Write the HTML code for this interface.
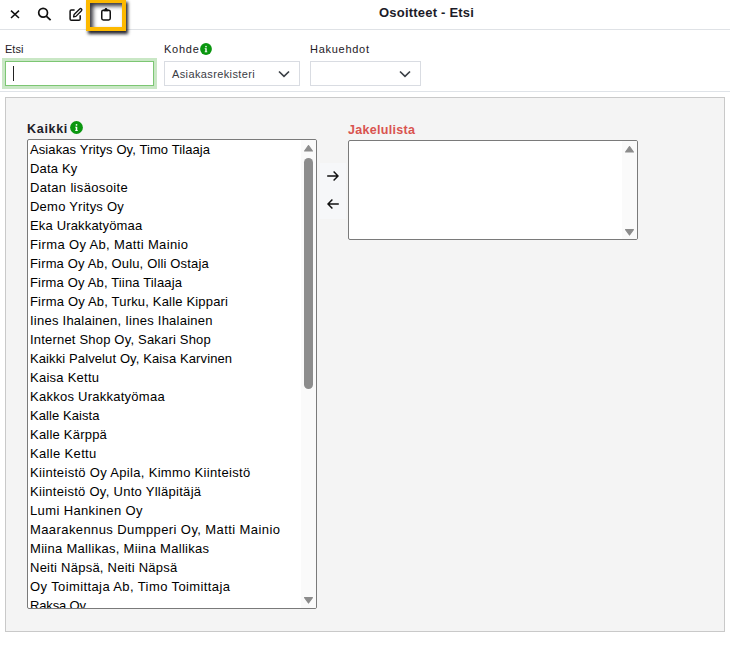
<!DOCTYPE html>
<html><head><meta charset="utf-8">
<style>
html,body{margin:0;padding:0;background:#fff;width:730px;height:658px;overflow:hidden;position:relative;font-family:"Liberation Sans",sans-serif;color:#222;}
.abs{position:absolute;}
.hline{position:absolute;left:0;width:730px;height:1px;}
.lbl{position:absolute;font-size:11px;line-height:13px;color:#1e2026;white-space:nowrap;}
.sel{position:absolute;top:61px;height:23px;border:1px solid #d9dce2;background:#fff;}
.chev{position:absolute;}
.info{position:absolute;width:11px;height:11px;border-radius:50%;background:#109a1e;}
.panel{position:absolute;left:5px;top:97px;width:718px;height:533px;border:1px solid #c9c9c9;background:#f4f4f4;}
.list{position:absolute;background:#fff;border:1px solid #7a7a7a;border-radius:2px;overflow:hidden;}
.item{position:absolute;left:2px;font-size:13px;line-height:19px;color:#000;white-space:nowrap;}
.track{position:absolute;right:0;top:0;bottom:0;width:15px;background:#fafafa;}
.bold{font-weight:bold;}
</style></head><body>
<!-- header -->
<div class="hline" style="top:29px;background:#dfe2e6"></div>
<svg class="abs" style="left:9px;top:9px" width="12" height="11" viewBox="0 0 12 11"><path d="M2 1.6 L10 9 M10 1.6 L2 9" stroke="#111" stroke-width="1.55" fill="none"/></svg>
<svg class="abs" style="left:36px;top:6px" width="17" height="16" viewBox="0 0 17 16"><circle cx="7.1" cy="6.8" r="4.4" stroke="#111" stroke-width="1.7" fill="none"/><path d="M10.3 10.1 L14.6 14.2" stroke="#111" stroke-width="1.8" fill="none"/></svg>
<svg class="abs" style="left:68px;top:7px" width="16" height="15" viewBox="0 0 16 15"><path d="M6.6 3 H3.4 Q2.1 3 2.1 4.3 V11.9 Q2.1 13.2 3.4 13.2 H10.9 Q12.2 13.2 12.2 11.9 V8.2" stroke="#111" stroke-width="1.5" fill="none"/><path d="M5.6 9.9 L6.1 7.5 L11.7 1.9 Q12.6 1.1 13.5 2 Q14.3 2.9 13.5 3.7 L7.9 9.4 Z" stroke="#111" stroke-width="1.35" fill="none" stroke-linejoin="round"/></svg>
<div class="abs" style="left:86px;top:-1px;width:32px;height:24px;border:4px solid #fdb900;box-shadow:2px 3px 3px rgba(0,0,10,.85), inset 3px 3px 4px rgba(0,0,10,.8);"></div>
<svg class="abs" style="left:99px;top:6px" width="15" height="16" viewBox="0 0 15 16"><rect x="2.75" y="4.2" width="8.5" height="9.7" rx="1.6" stroke="#111" stroke-width="1.5" fill="none"/><path d="M4.6 3.6 H9.4 V5.4 H4.6 Z" fill="#111"/><circle cx="7" cy="3.3" r="1.3" fill="#111"/></svg>
<div class="abs bold" style="left:379px;top:5px;font-size:13px;line-height:15px;color:#1c1c28;white-space:nowrap;letter-spacing:0.21px">Osoitteet - Etsi</div>

<!-- form row -->
<div class="lbl" style="left:5px;top:43px">Etsi</div>
<div class="abs" style="left:2px;top:58px;width:155px;height:31px;background:#c9e7c5"></div>
<div class="abs" style="left:5px;top:61px;width:147px;height:23px;border:1px solid #7cc673;background:#fff"></div>
<div class="abs" style="left:13px;top:66px;width:1px;height:15px;background:#222"></div>

<div class="lbl" style="left:164px;top:43px;letter-spacing:0.75px">Kohde</div>
<svg class="abs" style="left:200px;top:43px" width="12" height="12" viewBox="0 0 12 12"><circle cx="6" cy="6" r="5.9" fill="#0a960f"/><rect x="5.3" y="2.9" width="1.4" height="1.4" fill="#fff"/><path d="M4.7 5.3 H6.7 V8.5 H7.3 V9.3 H4.7 V8.5 H5.3 V6.1 H4.7 Z" fill="#fff"/></svg>
<div class="sel" style="left:164px;width:134px"></div>
<div class="lbl" style="left:172px;top:68px;color:#3a3c44;letter-spacing:0.38px">Asiakasrekisteri</div>
<svg class="abs" style="left:278px;top:70px" width="12" height="8" viewBox="0 0 12 8"><path d="M1 1.5 L6 6.3 L11 1.5" stroke="#3b4046" stroke-width="1.7" fill="none"/></svg>

<div class="lbl" style="left:310px;top:43px;letter-spacing:0.72px">Hakuehdot</div>
<div class="sel" style="left:310px;width:109px"></div>
<svg class="abs" style="left:399px;top:70px" width="12" height="8" viewBox="0 0 12 8"><path d="M1 1.5 L6 6.3 L11 1.5" stroke="#3b4046" stroke-width="1.7" fill="none"/></svg>

<div class="hline" style="top:91px;background:#dfe3e8"></div>

<!-- panel -->
<div class="panel"></div>
<div class="abs bold" style="left:27px;top:122px;font-size:12.5px;line-height:15px;color:#1c1c28;letter-spacing:0.7px">Kaikki</div>
<svg class="abs" style="left:70px;top:121px" width="13" height="13" viewBox="0 0 12 12"><circle cx="6" cy="6" r="5.9" fill="#0a960f"/><rect x="5.3" y="2.9" width="1.4" height="1.4" fill="#fff"/><path d="M4.7 5.3 H6.7 V8.5 H7.3 V9.3 H4.7 V8.5 H5.3 V6.1 H4.7 Z" fill="#fff"/></svg>

<div class="list" style="left:27px;top:139px;width:288px;height:468px">
  <div class="track"></div>
  <svg class="abs" style="left:275px;top:4px" width="11" height="9" viewBox="0 0 11 9"><path d="M5.5 1.6 L9.4 7 H1.6 Z" fill="#8c8c8c" stroke="#8c8c8c" stroke-width="1.2" stroke-linejoin="round"/></svg>
  <div class="abs" style="left:276px;top:18px;width:9px;height:231px;border-radius:4.5px;background:#8c8c8c"></div>
  <svg class="abs" style="left:275px;top:456px" width="11" height="9" viewBox="0 0 11 9"><path d="M1.6 1.6 H9.4 L5.5 7 Z" fill="#8c8c8c" stroke="#8c8c8c" stroke-width="1.2" stroke-linejoin="round"/></svg>
  <div id="items">
<div class="item" style="top:0px;letter-spacing:0.093px">Asiakas Yritys Oy, Timo Tilaaja</div>
<div class="item" style="top:19px;letter-spacing:0.167px">Data Ky</div>
<div class="item" style="top:38px;letter-spacing:0.347px">Datan lisäosoite</div>
<div class="item" style="top:57px;letter-spacing:0.231px">Demo Yritys Oy</div>
<div class="item" style="top:76px;letter-spacing:0.160px">Eka Urakkatyömaa</div>
<div class="item" style="top:95px;letter-spacing:0.350px">Firma Oy Ab, Matti Mainio</div>
<div class="item" style="top:114px;letter-spacing:0.159px">Firma Oy Ab, Oulu, Olli Ostaja</div>
<div class="item" style="top:133px;letter-spacing:0.152px">Firma Oy Ab, Tiina Tilaaja</div>
<div class="item" style="top:152px;letter-spacing:0.181px">Firma Oy Ab, Turku, Kalle Kippari</div>
<div class="item" style="top:171px;letter-spacing:0.245px">Iines Ihalainen, Iines Ihalainen</div>
<div class="item" style="top:190px;letter-spacing:0.193px">Internet Shop Oy, Sakari Shop</div>
<div class="item" style="top:209px;letter-spacing:0.109px">Kaikki Palvelut Oy, Kaisa Karvinen</div>
<div class="item" style="top:228px;letter-spacing:0.260px">Kaisa Kettu</div>
<div class="item" style="top:247px;letter-spacing:0.256px">Kakkos Urakkatyömaa</div>
<div class="item" style="top:266px;letter-spacing:0.073px">Kalle Kaista</div>
<div class="item" style="top:285px;letter-spacing:0.218px">Kalle Kärppä</div>
<div class="item" style="top:304px;letter-spacing:0.340px">Kalle Kettu</div>
<div class="item" style="top:323px;letter-spacing:0.317px">Kiinteistö Oy Apila, Kimmo Kiinteistö</div>
<div class="item" style="top:342px;letter-spacing:0.283px">Kiinteistö Oy, Unto Ylläpitäjä</div>
<div class="item" style="top:361px;letter-spacing:0.373px">Lumi Hankinen Oy</div>
<div class="item" style="top:380px;letter-spacing:0.406px">Maarakennus Dumpperi Oy, Matti Mainio</div>
<div class="item" style="top:399px;letter-spacing:0.297px">Miina Mallikas, Miina Mallikas</div>
<div class="item" style="top:418px;letter-spacing:0.243px">Neiti Näpsä, Neiti Näpsä</div>
<div class="item" style="top:437px;letter-spacing:0.394px">Oy Toimittaja Ab, Timo Toimittaja</div>
<div class="item" style="top:456px;letter-spacing:-0.150px">Raksa Oy</div>
</div>
</div>
</div>
</div>
</div>
</div>

<div class="abs" style="left:320px;top:163px;width:26px;height:56px;background:#f6f7f9"></div>
<svg class="abs" style="left:326px;top:170px" width="14" height="12" viewBox="0 0 14 12"><path d="M1.2 6 H12 M7.6 1.4 L12 6 L7.6 10.6" stroke="#111" stroke-width="1.45" fill="none"/></svg>
<svg class="abs" style="left:326px;top:198px" width="14" height="12" viewBox="0 0 14 12"><path d="M12.8 6 H2 M6.4 1.4 L2 6 L6.4 10.6" stroke="#111" stroke-width="1.45" fill="none"/></svg>

<div class="abs bold" style="left:348px;top:123px;font-size:12.5px;line-height:15px;color:#d9534f;letter-spacing:0.3px">Jakelulista</div>
<div class="list" style="left:348px;top:140px;width:288px;height:98px">
  <div class="track"></div>
  <svg class="abs" style="left:275px;top:4px" width="11" height="9" viewBox="0 0 11 9"><path d="M5.5 1.6 L9.4 7 H1.6 Z" fill="#8c8c8c" stroke="#8c8c8c" stroke-width="1.2" stroke-linejoin="round"/></svg>
  <svg class="abs" style="left:275px;top:87px" width="11" height="9" viewBox="0 0 11 9"><path d="M1.6 1.6 H9.4 L5.5 7 Z" fill="#8c8c8c" stroke="#8c8c8c" stroke-width="1.2" stroke-linejoin="round"/></svg>
</div>
</body></html>
